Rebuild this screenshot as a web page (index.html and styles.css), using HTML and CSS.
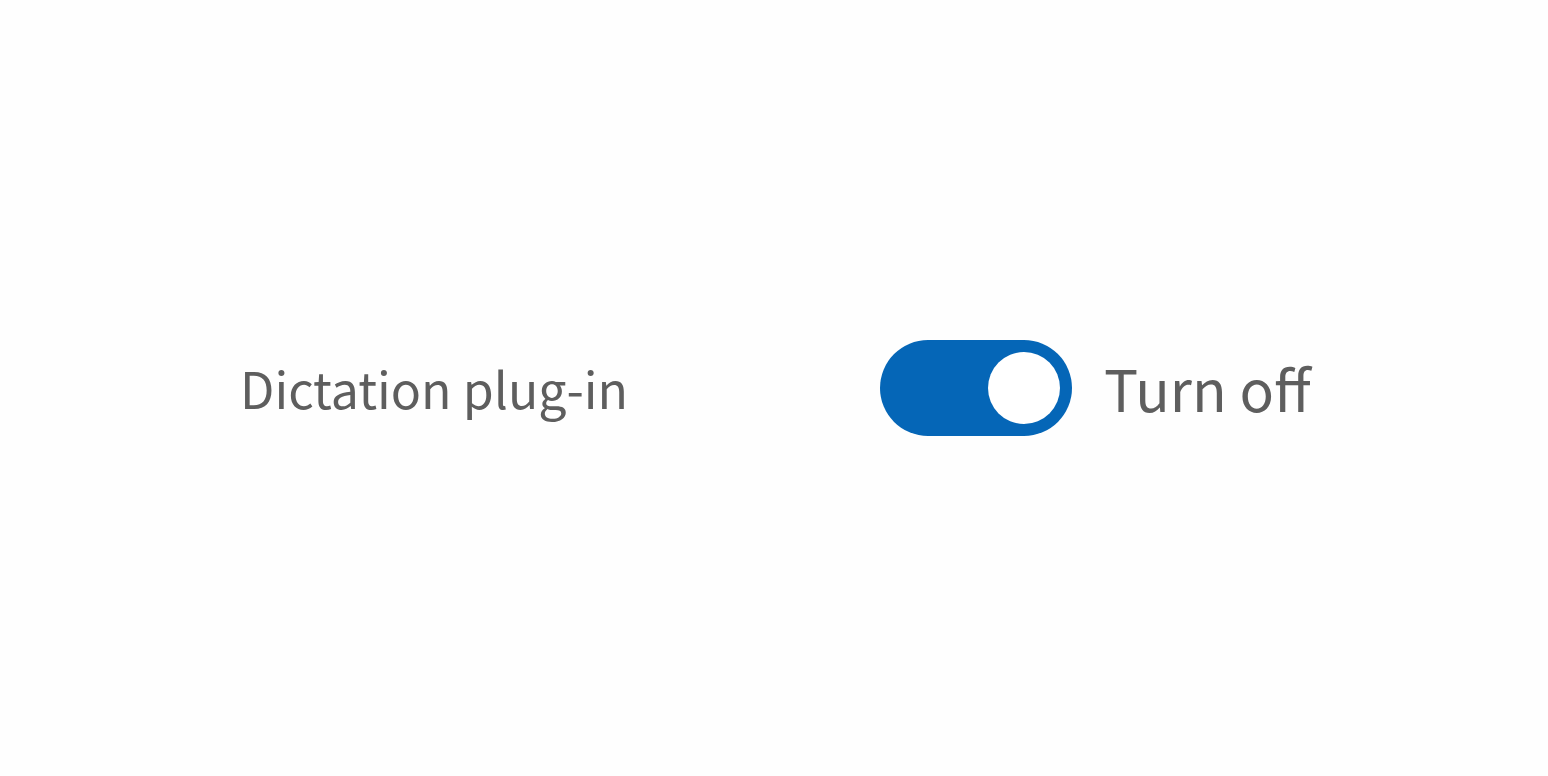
FILE: index.html
```html
<!DOCTYPE html>
<html lang="en">
<head>
  <meta charset="UTF-8" />
  <meta name="viewport" content="width=device-width, initial-scale=1.0"/>
  <title>Dictation plug-in</title>
  <link rel="stylesheet" href="styles.css">
</head>
<body>
  <main class="setting">
    <label class="setting-name" for="dictation">Dictation plug-in</label>
    <div class="control">
      <input class="switch" type="checkbox" role="switch" id="dictation" checked>
      <label class="switch-label" for="dictation">Turn off</label>
    </div>
  </main>
</body>
</html>
```

FILE: styles.css
```css
* {
  box-sizing: border-box;
}

body {
  margin: 0;
  min-height: 100vh;
  display: flex;
  align-items: center;
  background: #fefefe;
  color: #5e5e5e;
  font-family: "Source Sans Pro", "Noto Sans CJK SC", "Noto Sans", sans-serif;
}

.setting {
  width: 100%;
  padding: 0 32px 0 240px;
  display: flex;
  align-items: center;
}

.setting-name {
  flex: 0 1 640px;
  padding-bottom: 2px;
  font-size: 50px;
  line-height: 80px;
}

.control {
  display: flex;
  align-items: center;
  gap: 32px;
}

.switch {
  appearance: none;
  flex: none;
  width: 192px;
  height: 96px;
  margin: 0;
  padding: 12px;
  display: flex;
  justify-content: flex-start;
  border-radius: 48px;
  background: #767676;
  cursor: pointer;
}

.switch::before {
  content: "";
  width: 72px;
  height: 72px;
  border-radius: 50%;
  background: #ffffff;
}

.switch:checked {
  justify-content: flex-end;
  background: #0566b7;
}

.switch-label {
  padding-bottom: 2px;
  font-size: 57px;
  line-height: 80px;
  white-space: nowrap;
}
```
